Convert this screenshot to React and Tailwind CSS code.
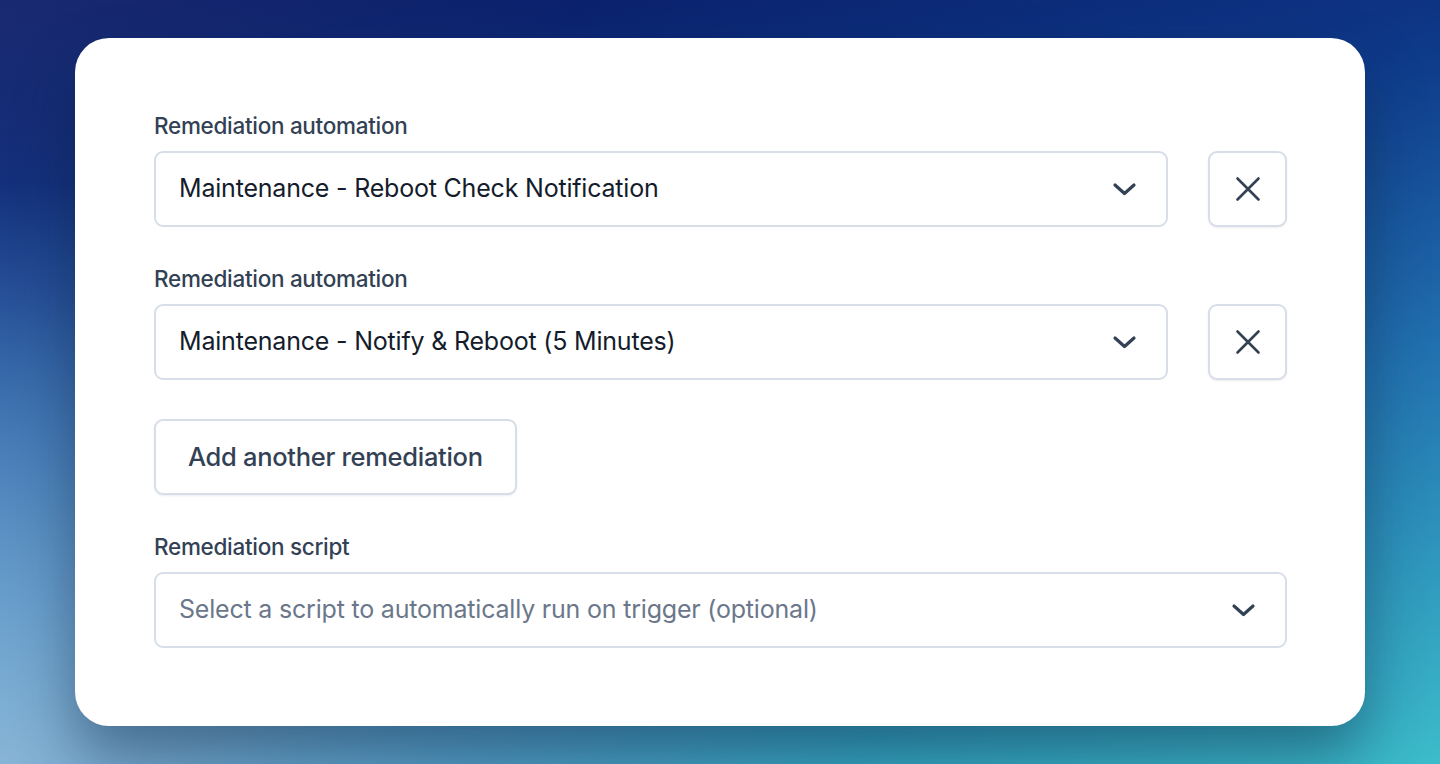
import React from "react";

const Chevron = () => (
  <svg width="25" height="16" viewBox="0 0 25 16" fill="none" stroke="#334155" strokeWidth="3.2" strokeLinecap="round" strokeLinejoin="round">
    <path d="M3 4l9.5 8.5L22 4" />
  </svg>
);

const Cross = () => (
  <svg width="28" height="28" viewBox="0 0 28 28" fill="none" stroke="#334155" strokeWidth="2.6" strokeLinecap="round">
    <path d="M3.5 3.5l21 21M24.5 3.5l-21 21" />
  </svg>
);

const Select = ({ value, placeholder }) => (
  <button className="flex-1 h-[76px] flex items-center justify-between pl-[23px] pr-[29px] bg-white border-2 border-[#d7dee8] rounded-[9px] text-left">
    {value ? (
      <span className="text-[25px] text-[#141c2c] tracking-[-0.2px]">{value}</span>
    ) : (
      <span className="text-[25px] text-[#6b778a] tracking-[-0.2px]">{placeholder}</span>
    )}
    <Chevron />
  </button>
);

const Field = ({ label, children }) => (
  <div className="flex flex-col">
    <label className="text-[22.5px] leading-[28px] font-medium text-[#334155] tracking-[-0.3px] mb-[11px]">{label}</label>
    {children}
  </div>
);

export default function App() {
  return (
    <div
      className="w-[1440px] h-[764px] flex items-start justify-center pt-[38px] bg-[radial-gradient(ellipse_75%_95%_at_0%_100%,rgba(140,182,216,0.95)_0%,rgba(120,165,210,0.55)_40%,rgba(120,165,210,0)_80%),radial-gradient(ellipse_40%_50%_at_0%_0%,rgba(40,60,130,0.5),rgba(40,60,130,0)),linear-gradient(170deg,#0a1660_0%,#0e3a8a_30%,#2272b0_60%,#3cbcca_100%)]"
      style={{ fontFamily: "Inter, 'Noto Sans', sans-serif" }}
    >
      <div className="w-[1290px] h-[688px] bg-white rounded-[34px] shadow-[0_30px_60px_rgba(10,30,60,0.45)] pl-[79px] pr-[78px] pt-[74px] pb-[78px] flex flex-col gap-[38px]">
        <Field label="Remediation automation">
          <div className="flex gap-[40px]">
            <Select value="Maintenance - Reboot Check Notification" />
            <button className="w-[79px] h-[76px] flex items-center justify-center bg-white border-2 border-[#d7dee8] rounded-[9px] shadow-[0_1px_2px_rgba(15,23,42,0.08)]">
              <Cross />
            </button>
          </div>
        </Field>
        <Field label="Remediation automation">
          <div className="flex gap-[40px]">
            <Select value="Maintenance - Notify & Reboot (5 Minutes)" />
            <button className="w-[79px] h-[76px] flex items-center justify-center bg-white border-2 border-[#d7dee8] rounded-[9px] shadow-[0_1px_2px_rgba(15,23,42,0.08)]">
              <Cross />
            </button>
          </div>
        </Field>
        <div className="pt-[1px]">
          <button className="h-[76px] px-[32px] bg-white border-2 border-[#d7dee8] rounded-[9px] shadow-[0_1px_2px_rgba(15,23,42,0.08)] text-[25.5px] font-medium text-[#334155] tracking-[-0.3px]">
            Add another remediation
          </button>
        </div>
        <Field label="Remediation script">
          <div className="flex">
            <Select placeholder="Select a script to automatically run on trigger (optional)" />
          </div>
        </Field>
      </div>
    </div>
  );
}
